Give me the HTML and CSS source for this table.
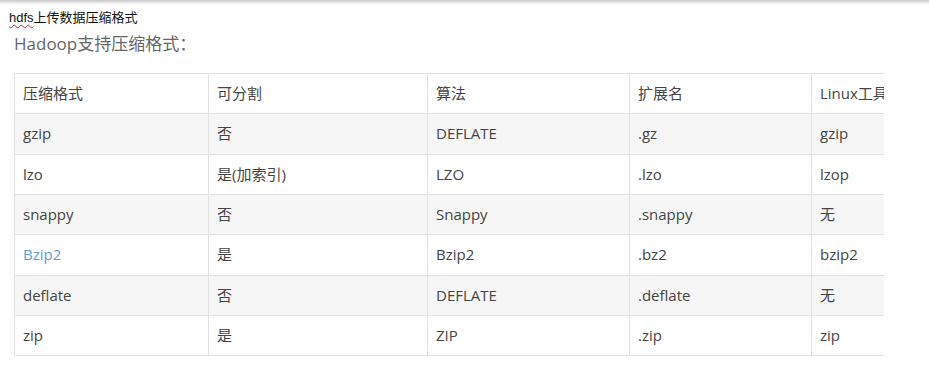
FILE: index.html
```html
<!DOCTYPE html>
<html lang="zh-CN">
<head>
<meta charset="utf-8">
<title>hdfs上传数据压缩格式</title>
<link rel="stylesheet" href="styles.css">
</head>
<body>
<div class="topbar"></div>
<div class="page">
  <div class="title"><span class="spell">hdfs</span>上传数据压缩格式</div>
  <h2 class="heading">Hadoop支持压缩格式：</h2>
  <div class="table-wrap">
    <table class="fmt">
      <colgroup>
        <col class="c1"><col class="c2"><col class="c3"><col class="c4"><col class="c5">
      </colgroup>
      <thead>
        <tr><th>压缩格式</th><th>可分割</th><th>算法</th><th>扩展名</th><th>Linux工具</th></tr>
      </thead>
      <tbody>
        <tr><td>gzip</td><td>否</td><td>DEFLATE</td><td>.gz</td><td>gzip</td></tr>
        <tr><td>lzo</td><td>是(加索引)</td><td>LZO</td><td>.lzo</td><td>lzop</td></tr>
        <tr><td>snappy</td><td>否</td><td>Snappy</td><td>.snappy</td><td>无</td></tr>
        <tr><td><a class="link" href="#">Bzip2</a></td><td>是</td><td>Bzip2</td><td>.bz2</td><td>bzip2</td></tr>
        <tr><td>deflate</td><td>否</td><td>DEFLATE</td><td>.deflate</td><td>无</td></tr>
        <tr><td>zip</td><td>是</td><td>ZIP</td><td>.zip</td><td>zip</td></tr>
      </tbody>
    </table>
  </div>
</div>
</body>
</html>
```

FILE: styles.css
```css
html, body {
  margin: 0;
  padding: 0;
  background: #fff;
}
body {
  font-family: "Open Sans", "Noto Sans CJK SC", sans-serif;
  color: #333;
}
.topbar {
  height: 5px;
  background: linear-gradient(#c8c8c8, #ececec 60%, #fff);
}
.page {
  padding: 0 0 0 9px;
}
.title {
  font-family: "Liberation Sans", "Noto Sans CJK SC", sans-serif;
  font-size: 13px;
  line-height: 16px;
  color: #111;
  margin-top: 5px;
}
.spell {
  text-decoration: underline wavy #e02020;
  text-decoration-thickness: 1px;
  text-underline-offset: 2px;
}
.heading {
  font-family: "Open Sans", "Noto Sans CJK SC", sans-serif;
  font-weight: normal;
  font-size: 17px;
  line-height: 20px;
  color: #666;
  margin: 8px 0 0 5px;
}
.table-wrap {
  margin: 19px 0 0 5px;
  width: 870px;
  overflow: hidden;
}
.fmt {
  border-collapse: collapse;
  table-layout: fixed;
  width: 1000px;
  font-size: 15px;
}
.c1 { width: 194px; }
.c2 { width: 219px; }
.c3 { width: 202px; }
.c4 { width: 182px; }
.c5 { width: 203px; }
.fmt th, .fmt td {
  border: 1px solid #e2e2e2;
  padding: 9px 8px;
  line-height: 21.33px;
  text-align: left;
  font-weight: normal;
  color: #444;
  white-space: nowrap;
}
.fmt tbody tr:nth-child(odd) {
  background: #f6f6f6;
}
.link {
  color: #5b9bd5;
  text-decoration: none;
}
```
